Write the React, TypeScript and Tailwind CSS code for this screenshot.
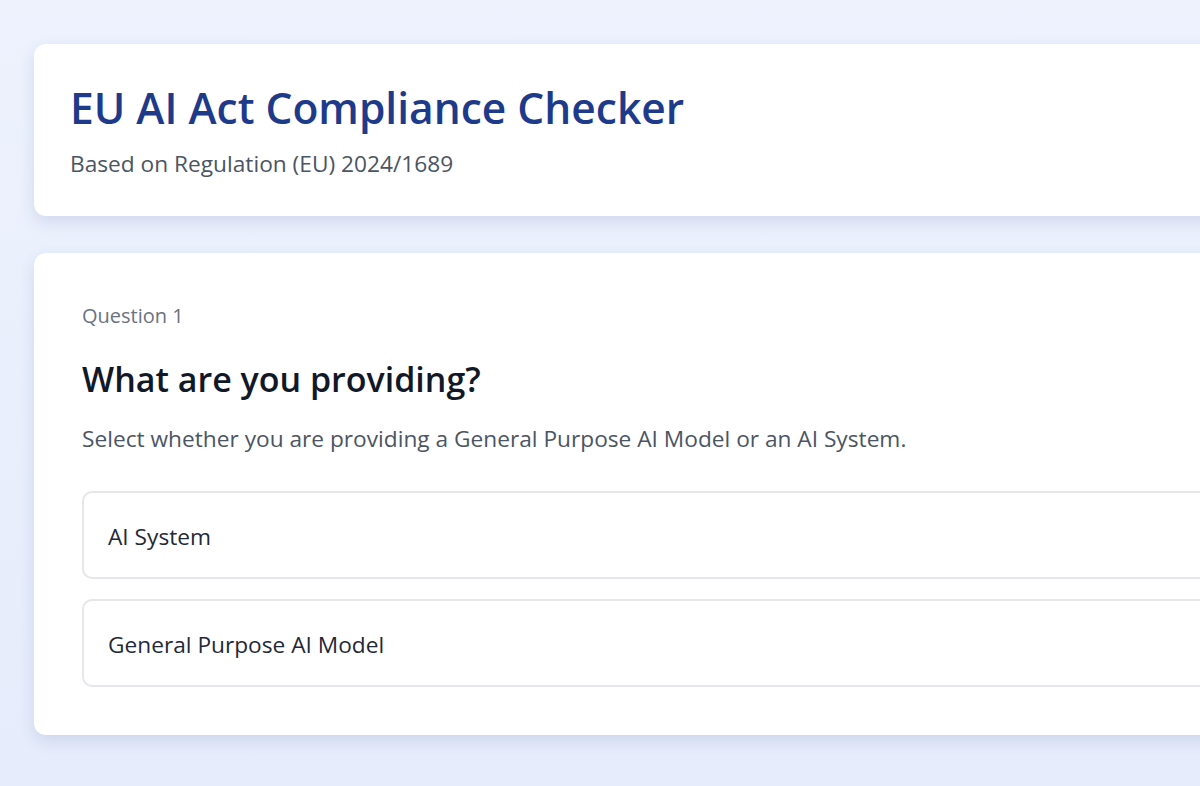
export default function App() {
  const options = ['AI System', 'General Purpose AI Model'];

  return (
    <div
      className="min-h-screen w-screen overflow-hidden bg-gradient-to-b from-[#edf2fd] to-[#e6ecfb] pt-[44px] pl-[34px]"
      style={{ fontFamily: '"Open Sans", "Noto Sans", sans-serif' }}
    >
      <div className="w-[1300px]">
        {/* Header */}
        <div className="bg-white rounded-xl shadow-[0_6px_16px_rgba(30,58,138,0.13)] px-[36px] pt-[38px] pb-[37px]">
          <h1 className="text-[42.5px] leading-[52px] font-semibold text-[#1e3a8a]">
            EU AI Act Compliance Checker
          </h1>
          <p className="mt-[15px] text-[22.7px] leading-[30px] text-[#4b5563]">
            Based on Regulation (EU) 2024/1689
          </p>
        </div>

        {/* Question card */}
        <div className="mt-[37px] bg-white rounded-xl shadow-[0_6px_16px_rgba(30,58,138,0.13)] p-[48px]">
          <p className="text-[20px] leading-[30px] text-[#6b7280]">Question 1</p>
          <h2 className="mt-[26px] text-[34px] leading-[44px] font-semibold text-[#111827]">
            What are you providing?
          </h2>
          <p className="mt-[22px] text-[22.7px] leading-[32px] text-[#4b5563]">
            Select whether you are providing a General Purpose AI Model or an AI System.
          </p>
          <div className="mt-[36px] flex flex-col gap-[20px]">
            {options.map((o) => (
              <div
                key={o}
                className="h-[88px] flex items-center border-2 border-[#e5e7eb] rounded-[10px] px-[24px] pt-[4px] text-[22.7px] text-[#1f2937]"
              >
                {o}
              </div>
            ))}
          </div>
        </div>
      </div>
    </div>
  );
}
